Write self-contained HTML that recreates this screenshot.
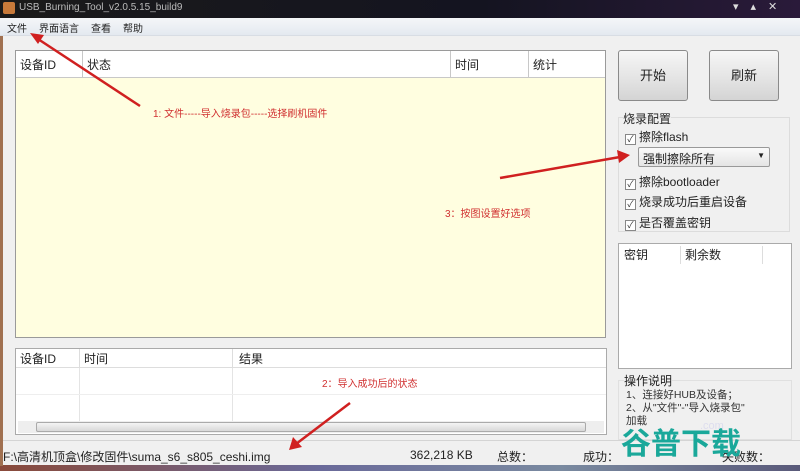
<!DOCTYPE html>
<html><head><meta charset="utf-8"><style>
*{margin:0;padding:0;box-sizing:border-box}
body{width:800px;height:471px;overflow:hidden;background:#f0f0f0;font-family:"Liberation Sans","Noto Sans CJK SC",sans-serif;font-size:12px;color:#222;position:relative}
.a{position:absolute}
.tb{left:0;top:0;width:800px;height:18px;background:linear-gradient(90deg,#1a1a1a,#141420 60%,#2a1a3a)}
.menu{left:0;top:18px;width:800px;height:18px;background:linear-gradient(#f4f6f8,#e4e9f0);border-bottom:1px solid #d8dde4;font-size:10px;padding:2px 0 0 7px}
.menu span{margin-right:12px}
.tbl{background:#fffee0;border:1px solid #9a9a9a}
.hd{background:#fff;border-bottom:1px solid #c8c8c8;height:27px;display:flex}
.hd div{border-right:1px solid #c8c8c8;padding:5px 4px;font-size:12px}
.btn{border:1px solid #8a8a8a;border-radius:3px;background:linear-gradient(#f6f6f6,#e6e6e6 50%,#d4d4d4);text-align:center;line-height:50px;font-size:13px}
.cb{font-size:12px}
.cb i{display:inline-block;width:11px;height:11px;border:1px solid #888;background:#fff;margin-right:3px;vertical-align:-1px;font-style:normal;font-size:9px;line-height:9px;text-align:center;color:#333}
.red{color:#d03030;font-size:10px}
</style></head><body>
<div class="a tb"></div>
<div class="a" style="left:3px;top:2px;width:12px;height:12px;background:#c87a3a;border-radius:2px"></div>
<div class="a" style="left:19px;top:2px;color:#bbb;font-size:10px">USB_Burning_Tool_v2.0.5.15_build9</div>
<div class="a" style="left:733px;top:0;color:#ddd;font-size:11px;letter-spacing:12px">▾▴✕</div>
<div class="a menu"><span>文件</span><span>界面语言</span><span>查看</span><span>帮助</span></div>

<div class="a tbl" style="left:15px;top:50px;width:591px;height:288px">
<div class="hd"><div style="width:67px">设备ID</div><div style="width:368px">状态</div><div style="width:78px">时间</div><div style="flex:1;border:0">统计</div></div></div>

<div class="a btn" style="left:618px;top:50px;width:70px;height:51px">开始</div>
<div class="a btn" style="left:709px;top:50px;width:70px;height:51px">刷新</div>

<div class="a" style="left:618px;top:117px;width:172px;height:115px;border:1px solid #dcdcdc"></div>
<div class="a" style="left:623px;top:110px;background:#f0f0f0;font-size:12px">烧录配置</div>
<div class="a cb" style="left:625px;top:128px"><i>✓</i>擦除flash</div>
<div class="a" style="left:638px;top:147px;width:132px;height:20px;border:1px solid #999;border-radius:2px;background:linear-gradient(#fafafa,#e4e4e4);padding:2px 4px;font-size:12px">强制擦除所有<span style="position:absolute;right:4px;top:3px;font-size:8px">▼</span></div>
<div class="a cb" style="left:625px;top:173px"><i>✓</i>擦除bootloader</div>
<div class="a cb" style="left:625px;top:193px"><i>✓</i>烧录成功后重启设备</div>
<div class="a cb" style="left:625px;top:214px"><i>✓</i>是否覆盖密钥</div>

<div class="a" style="left:618px;top:243px;width:174px;height:126px;background:#fff;border:1px solid #aaa">
<div style="height:20px;display:flex;font-size:12px;padding-top:2px"><div style="width:62px;padding-left:5px;border-right:1px solid #ddd">密钥</div><div style="width:82px;padding-left:4px;border-right:1px solid #ddd">剩余数</div></div></div>

<div class="a" style="left:618px;top:380px;width:174px;height:60px;border:1px solid #e0e0e0"></div>
<div class="a" style="left:624px;top:372px;font-size:12px;background:#f0f0f0">操作说明</div>
<div class="a" style="left:626px;top:389px;font-size:10.5px;line-height:13px;color:#333">1、连接好HUB及设备；<br>2、从"文件"-"导入烧录包"<br>加载</div>

<div class="a" style="left:15px;top:348px;width:592px;height:87px;background:#fff;border:1px solid #aaa">
<div style="display:flex;height:19px;font-size:12px;border-bottom:1px solid #ddd"><div style="width:64px;padding:1px 4px;border-right:1px solid #ddd">设备ID</div><div style="width:153px;padding:1px 4px;border-right:1px solid #ddd">时间</div><div style="padding:1px 6px">结果</div></div>
<div style="position:absolute;left:63px;top:19px;width:1px;height:53px;background:#e4e4e4"></div>
<div style="position:absolute;left:216px;top:19px;width:1px;height:53px;background:#e4e4e4"></div>
<div style="position:absolute;left:0;top:45px;width:100%;height:1px;background:#eee"></div>
<div style="position:absolute;left:2px;top:72px;width:586px;height:12px;background:#eee"><div style="margin:1px 18px;height:10px;border:1px solid #aaa;border-radius:2px;background:linear-gradient(#f4f4f4,#d8d8d8)"></div></div>
</div>

<div class="a" style="left:0;top:440px;width:800px;height:25px;border-top:1px solid #d4d4d4;background:#f0f0f0"></div>
<div class="a" style="left:3px;top:448px;font-size:12px">F:\高清机顶盒\修改固件\suma_s6_s805_ceshi.img</div>
<div class="a" style="left:410px;top:448px;font-size:12px">362,218 KB</div>
<div class="a" style="left:497px;top:448px;font-size:12px">总数：</div>
<div class="a" style="left:583px;top:448px;font-size:12px">成功：</div>
<div class="a" style="left:722px;top:448px;font-size:12px">失败数：</div>
<div class="a" style="left:0;top:465px;width:800px;height:6px;background:linear-gradient(90deg,#8a4a3a,#6a6a9a 40%,#7a8aa0 70%,#5a5a7a)"></div>
<div class="a" style="left:0;top:36px;width:3px;height:430px;background:#a07050"></div>

<div class="a" style="left:621px;top:428px;font-size:30px;font-weight:bold;color:#1aa89a;line-height:34px">谷普下载</div>
<div class="a" style="left:700px;top:420px;font-size:11px;color:#dde">.com</div>

<div class="a red" style="left:153px;top:105px">1: 文件-----导入烧录包-----选择刷机固件</div>
<div class="a red" style="left:445px;top:205px">3：按图设置好选项</div>
<div class="a red" style="left:322px;top:375px">2：导入成功后的状态</div>

<svg class="a" style="left:0;top:0" width="800" height="471">
<g stroke="#d02020" stroke-width="2.5" fill="#d02020">
<line x1="140" y1="106" x2="38" y2="39"/><polygon points="30,33 44,35 38,44" stroke="none"/>
<line x1="500" y1="178" x2="620" y2="157"/><polygon points="630,155 617,150 619,163" stroke="none"/>
<line x1="350" y1="403" x2="296" y2="444"/><polygon points="289,450 293,437 302,447" stroke="none"/>
</g></svg>
</body></html>
